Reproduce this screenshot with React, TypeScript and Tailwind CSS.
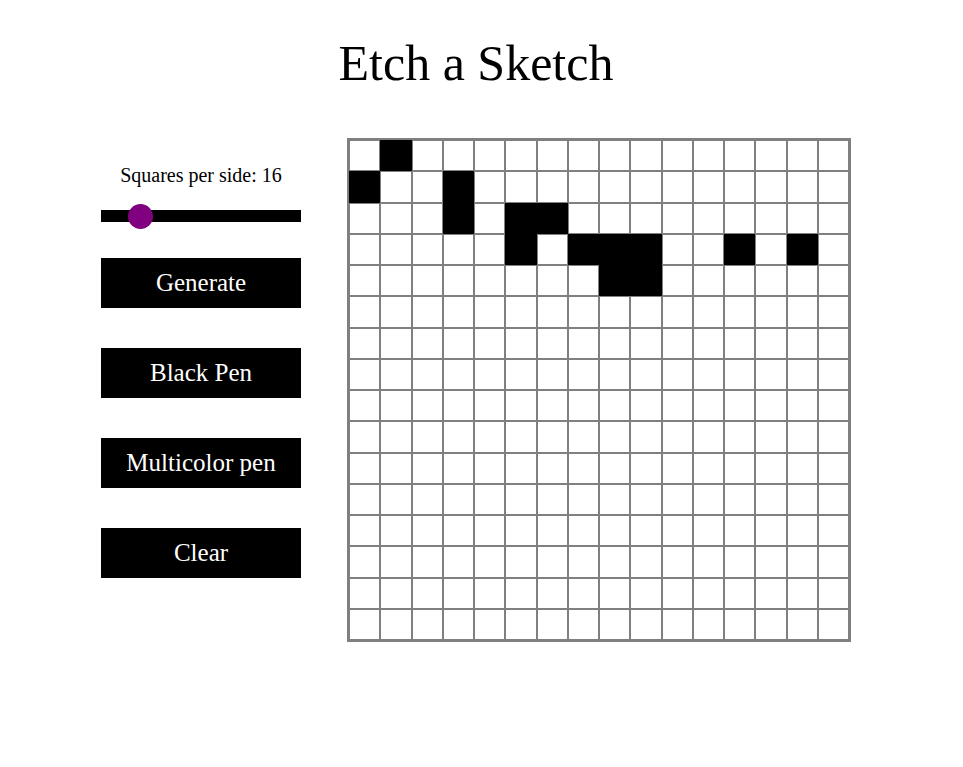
import { useState } from 'react';

const SIZE = 16;

// cells that were already drawn in the screenshot
const initial = new Set<number>([
  0 * SIZE + 1,
  1 * SIZE + 0,
  1 * SIZE + 3,
  2 * SIZE + 3,
  2 * SIZE + 5,
  2 * SIZE + 6,
  3 * SIZE + 5,
  3 * SIZE + 7,
  3 * SIZE + 8,
  3 * SIZE + 9,
  3 * SIZE + 12,
  3 * SIZE + 14,
  4 * SIZE + 8,
  4 * SIZE + 9,
]);

const buttonClass =
  'w-[200px] h-[50px] bg-black text-white text-[25px] leading-[50px] text-center cursor-pointer';

export default function App() {
  const [side, setSide] = useState(16);
  const [filled, setFilled] = useState<Set<number>>(initial);

  const paint = (i: number) => {
    if (filled.has(i)) return;
    const next = new Set(filled);
    next.add(i);
    setFilled(next);
  };

  return (
    <div className="min-h-screen bg-white font-['Liberation_Serif','Times_New_Roman',serif] text-black">
      <div className="ml-[101px] w-[750px]">
        <h1 className="pt-[34px] text-center text-[50px] leading-[58px] font-normal">Etch a Sketch</h1>

        <div className="mt-[46px] flex gap-[46px]">
          <div className="w-[200px] pt-[26px] flex flex-col">
            <label className="text-center text-[20px] leading-[23px]">Squares per side: {side}</label>
            <input
              type="range"
              min={1}
              max={100}
              value={side}
              onChange={(e) => setSide(Number(e.target.value))}
              className="mt-[23px] w-[200px] h-[12px] appearance-none bg-black outline-none cursor-pointer [&::-webkit-slider-thumb]:appearance-none [&::-webkit-slider-thumb]:w-[25px] [&::-webkit-slider-thumb]:h-[25px] [&::-webkit-slider-thumb]:rounded-full [&::-webkit-slider-thumb]:bg-[#800080] [&::-moz-range-thumb]:w-[25px] [&::-moz-range-thumb]:h-[25px] [&::-moz-range-thumb]:rounded-full [&::-moz-range-thumb]:border-0 [&::-moz-range-thumb]:bg-[#800080]"
            />
            <div className="mt-[36px] flex flex-col gap-[40px]">
              <button className={buttonClass}>Generate</button>
              <button className={buttonClass}>Black Pen</button>
              <button className={buttonClass}>Multicolor pen</button>
              <button className={buttonClass} onClick={() => setFilled(new Set())}>
                Clear
              </button>
            </div>
          </div>

          <div className="w-[504px] h-[504px] border-2 border-[#808080] grid grid-cols-16 grid-rows-16">
            {Array.from({ length: SIZE * SIZE }, (_, i) => (
              <div
                key={i}
                onMouseOver={() => paint(i)}
                className={
                  filled.has(i)
                    ? 'border border-black bg-black'
                    : 'border border-[#808080] bg-white'
                }
              />
            ))}
          </div>
        </div>
      </div>
    </div>
  );
}
